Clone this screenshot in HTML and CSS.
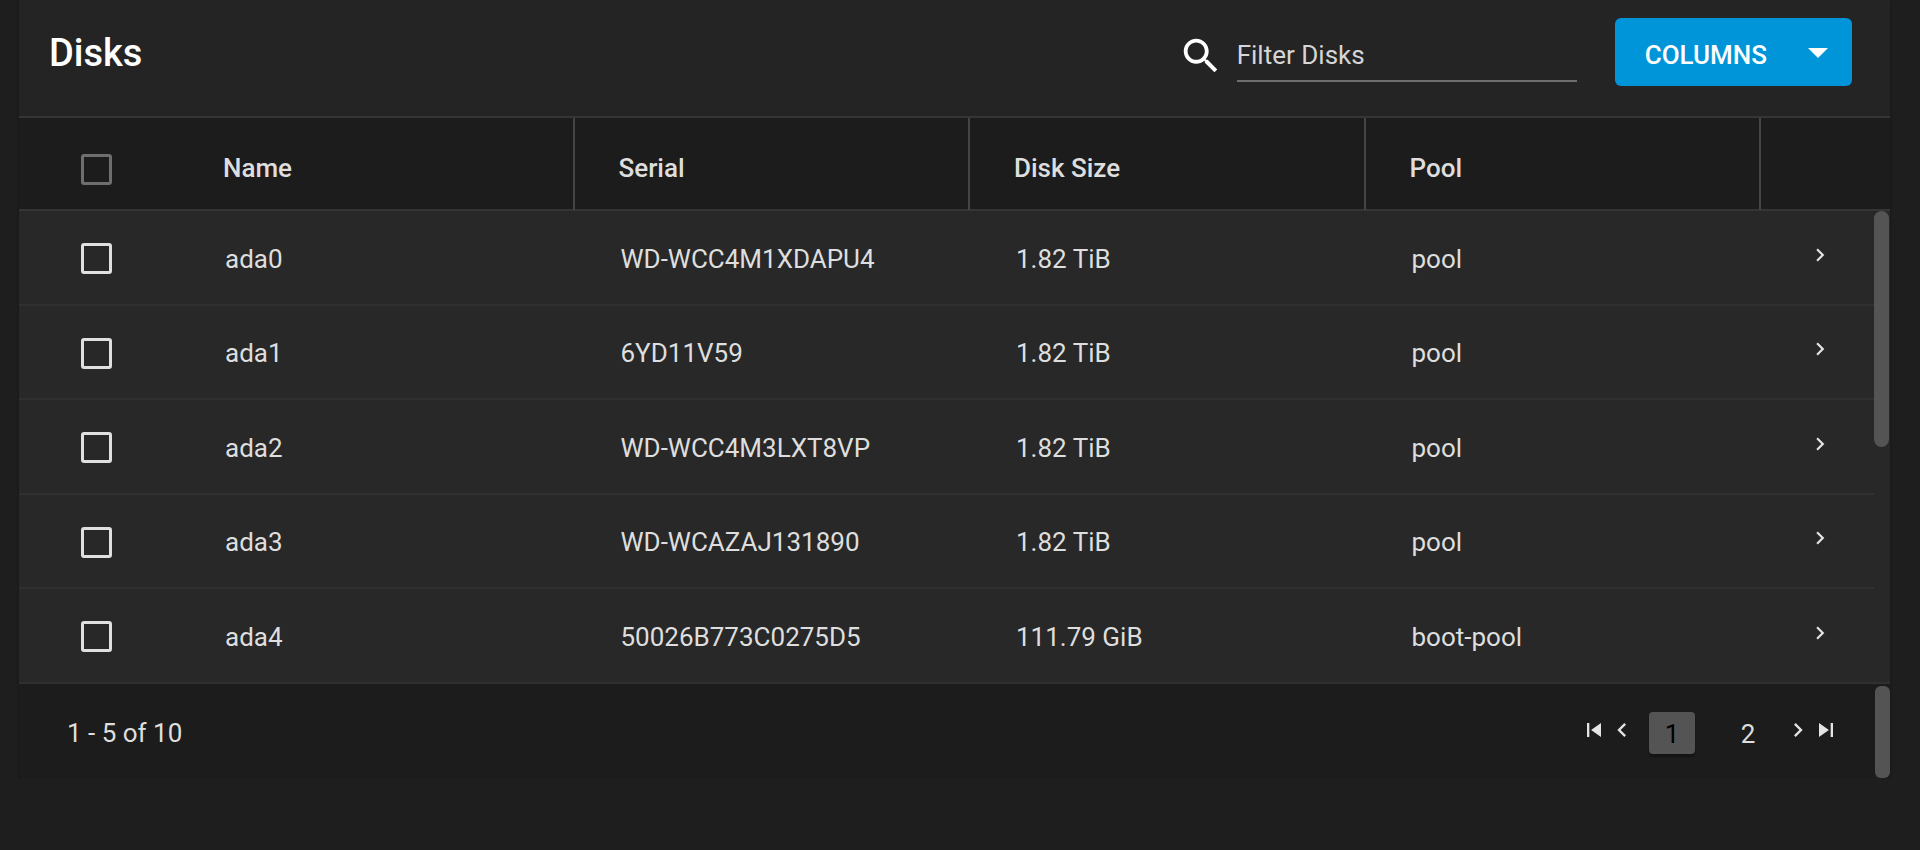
FILE: index.html
```html
<!DOCTYPE html>
<html lang="en">
<head>
<meta charset="utf-8">
<title>Disks</title>
<link rel="stylesheet" href="styles.css">
</head>
<body>
<svg class="sprite" aria-hidden="true">
  <symbol id="chevron-right" viewBox="0 0 24 24"><path d="M8.59 16.59 13.17 12 8.59 7.41 10 6l6 6-6 6z"/></symbol>
  <symbol id="chevron-left" viewBox="0 0 24 24"><path d="M15.41 7.41 14 6l-6 6 6 6 1.41-1.41L10.83 12z"/></symbol>
  <symbol id="skip-prev" viewBox="0 0 24 24"><path d="M6 6h2v12H6zm3.5 6 8.5 6V6z"/></symbol>
  <symbol id="skip-next" viewBox="0 0 24 24"><path d="m6 18 8.500-6L6 6zM16 6v12h2V6z"/></symbol>
</svg>
<main class="card">
  <header class="toolbar">
    <h1 class="title">Disks</h1>
    <div class="search">
      <svg class="search-icon" viewBox="0 0 24 24" aria-hidden="true"><path d="M15.500 14h-.79l-.28-.27C15.410 12.590 16 11.110 16 9.500 16 5.910 13.090 3 9.500 3S3 5.910 3 9.500 5.910 16 9.500 16c1.610 0 3.090-.59 4.230-1.570l.27.28v.79l5 4.990L20.490 19zm-6 0C7.010 14 5 11.990 5 9.500S7.010 5 9.500 5 14 7.010 14 9.500 11.990 14 9.500 14z"/></svg>
      <input class="search-input" type="text" placeholder="Filter Disks" aria-label="Filter Disks">
    </div>
    <button class="columns" type="button">COLUMNS
      <svg class="caret" viewBox="0 0 24 24" aria-hidden="true"><path d="m7 10 5 5 5-5z"/></svg>
    </button>
  </header>
  <div class="table-wrap">
    <table class="table">
      <colgroup><col class="col-check"><col><col><col><col><col class="col-expand"></colgroup>
      <thead>
        <tr>
          <th class="check"><input class="box" type="checkbox" aria-label="Select all" disabled></th>
          <th class="split" scope="col">Name</th>
          <th class="split" scope="col">Serial</th>
          <th class="split" scope="col">Disk Size</th>
          <th class="split" scope="col">Pool</th>
          <th></th>
        </tr>
      </thead>
      <tbody>
        <tr>
          <td class="check"><input class="box" type="checkbox" aria-label="Select ada0"></td>
          <td>ada0</td><td>WD-WCC4M1XDAPU4</td><td>1.82 TiB</td><td>pool</td>
          <td class="expand"><button class="icon-btn" type="button" aria-label="Expand ada0"><svg class="icon-row"><use href="#chevron-right"/></svg></button></td>
        </tr>
        <tr>
          <td class="check"><input class="box" type="checkbox" aria-label="Select ada1"></td>
          <td>ada1</td><td>6YD11V59</td><td>1.82 TiB</td><td>pool</td>
          <td class="expand"><button class="icon-btn" type="button" aria-label="Expand ada1"><svg class="icon-row"><use href="#chevron-right"/></svg></button></td>
        </tr>
        <tr>
          <td class="check"><input class="box" type="checkbox" aria-label="Select ada2"></td>
          <td>ada2</td><td>WD-WCC4M3LXT8VP</td><td>1.82 TiB</td><td>pool</td>
          <td class="expand"><button class="icon-btn" type="button" aria-label="Expand ada2"><svg class="icon-row"><use href="#chevron-right"/></svg></button></td>
        </tr>
        <tr>
          <td class="check"><input class="box" type="checkbox" aria-label="Select ada3"></td>
          <td>ada3</td><td>WD-WCAZAJ131890</td><td>1.82 TiB</td><td>pool</td>
          <td class="expand"><button class="icon-btn" type="button" aria-label="Expand ada3"><svg class="icon-row"><use href="#chevron-right"/></svg></button></td>
        </tr>
        <tr>
          <td class="check"><input class="box" type="checkbox" aria-label="Select ada4"></td>
          <td>ada4</td><td>50026B773C0275D5</td><td>111.79 GiB</td><td>boot-pool</td>
          <td class="expand"><button class="icon-btn" type="button" aria-label="Expand ada4"><svg class="icon-row"><use href="#chevron-right"/></svg></button></td>
        </tr>
      </tbody>
    </table>
    <div class="track"><div class="thumb"></div></div>
  </div>
  <footer class="footer">
    <span class="count">1 - 5 of 10</span>
    <nav class="pager" aria-label="Pages">
      <button class="icon-btn" type="button" aria-label="First page"><svg class="icon"><use href="#skip-prev"/></svg></button>
      <button class="icon-btn" type="button" aria-label="Previous page"><svg class="icon"><use href="#chevron-left"/></svg></button>
      <div class="pages">
        <button class="page current" type="button" aria-current="page">1</button>
        <button class="page" type="button">2</button>
      </div>
      <button class="icon-btn" type="button" aria-label="Next page"><svg class="icon"><use href="#chevron-right"/></svg></button>
      <button class="icon-btn" type="button" aria-label="Last page"><svg class="icon"><use href="#skip-next"/></svg></button>
    </nav>
    <div class="footer-thumb"></div>
  </footer>
</main>
</body>
</html>
```
FILE: styles.css
```css
* { box-sizing: border-box; }

body {
  margin: 0;
  background: #1e1e1e;
  color: #dedede;
  font: 26px/32px Roboto, "Liberation Sans", sans-serif;
}

button, input { font: inherit; color: inherit; }
button { border: 0; background: none; padding: 0; cursor: pointer; }
svg { display: block; fill: currentColor; }
.sprite { display: none; }

.card {
  margin: 0 30px 0 19px;
  background: #282828;
  border-radius: 0 0 6px 6px;
  box-shadow: 0 2px 3px rgba(0, 0, 0, .35);
}

.toolbar {
  display: flex;
  align-items: center;
  padding: 18px 38px 30px 30px;
  background: #242424;
  border-bottom: 2px solid #353535;
}

.title {
  margin: 0 auto 0 0;
  padding-top: 2px;
  font-size: 38px;
  line-height: 46px;
  font-weight: 500;
  color: #fff;
}

.search { display: flex; align-items: center; gap: 13px; margin-right: 38px; }

.search-icon { width: 46px; height: 46px; margin-top: 8px; color: #fff; }

.search-input {
  width: 340px;
  height: 60px;
  padding: 8px 0 0;
  border: 0;
  border-bottom: 2px solid #6e6e6e;
  border-radius: 0;
  background: none;
  outline: 0;
}

.search-input::placeholder { color: #d6d6d6; opacity: 1; }

.columns {
  display: flex;
  align-items: center;
  gap: 27px;
  height: 68px;
  padding: 6px 10px 0 30px;
  border-radius: 6px;
  background: #0095d9;
  color: #fff;
  font-weight: 500;
}

.caret { width: 48px; height: 48px; margin-top: -6px; }

.table-wrap { position: relative; }

.table {
  width: 100%;
  table-layout: fixed;
  border-collapse: separate;
  border-spacing: 0;
}

.col-check { width: 160px; }
.col-expand { width: 129px; }

th, td {
  padding: 2px 0 0 46px;
  text-align: left;
  border-bottom: 2px solid #303030;
}

th {
  height: 93px;
  padding: 8px 0 0 44px;
  background: #1c1c1c;
  border-color: #353535;
  font-weight: 500;
}

td { height: 95px; }
tr:nth-child(even) td { height: 94px; }

.split { border-right: 2px solid #454545; }

.check { padding-left: 62px; }
th.check { padding-top: 12px; }

.box {
  appearance: none;
  display: block;
  width: 31px;
  height: 31px;
  margin: 0;
  border: 3px solid #e0e0e0;
  border-radius: 3px;
}

.box:disabled { border-color: #6e6e6e; }

.expand { padding: 0 0 6px 46px; }
.icon-btn { display: block; color: #e4e4e4; }
.icon-row { width: 26px; height: 26px; }
.icon { width: 28px; height: 28px; }

.track {
  position: absolute;
  top: 93px;
  right: 0;
  bottom: 2px;
  width: 16px;
  background: #282828;
}

.thumb {
  width: 15px;
  height: 50%;
  border-radius: 8px;
  background: #545454;
}

.footer {
  position: relative;
  display: flex;
  align-items: center;
  justify-content: space-between;
  height: 94px;
  padding: 4px 50px 0 48px;
  border-radius: 0 0 6px 6px;
  background: #1c1c1c;
}

.pager { display: flex; align-items: center; }
.pager .icon-btn { padding-bottom: 6px; }
.pages { display: flex; gap: 30px; margin: 0 13px; }

.page { width: 46px; height: 42px; padding-top: 2px; border-radius: 4px; }

.current {
  background: #545454;
  color: #000;
  box-shadow: 0 3px 2px rgba(0, 0, 0, .3);
}

.footer-thumb {
  position: absolute;
  top: 2px;
  right: 0;
  bottom: 0;
  width: 15px;
  border-radius: 6px;
  background: #545454;
}
```
